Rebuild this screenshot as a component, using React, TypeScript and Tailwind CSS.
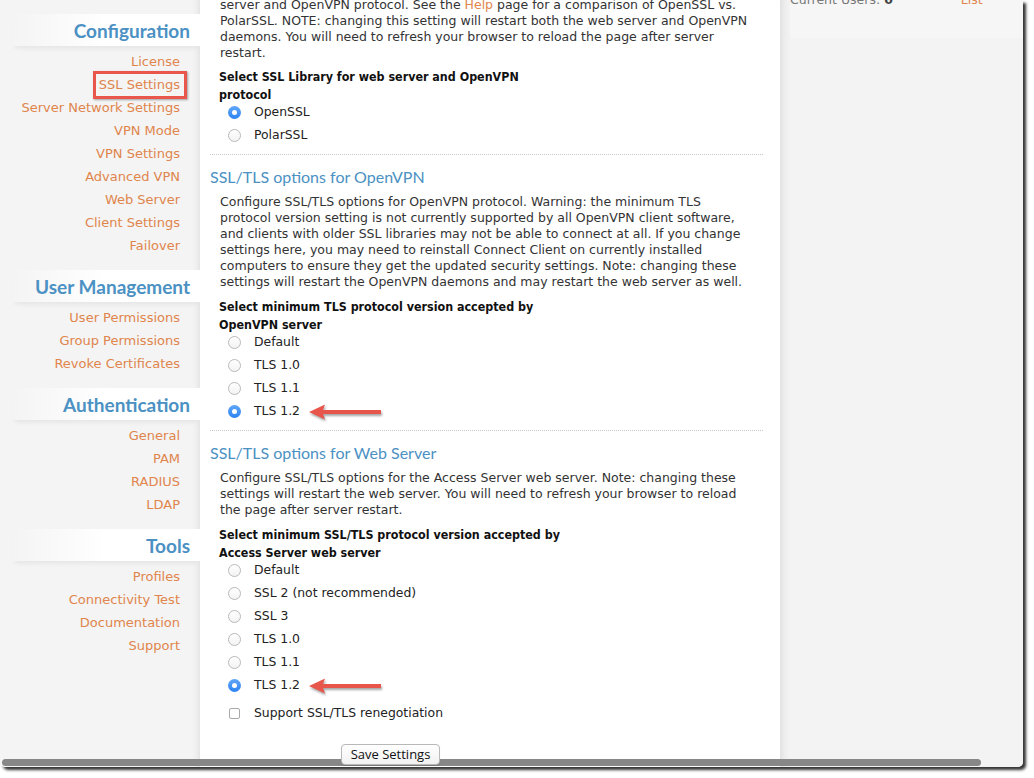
import React from "react";

const body = { fontFamily: '"DejaVu Sans", Verdana, sans-serif' };
const bold = { fontFamily: '"DejaVu Sans Condensed", "DejaVu Sans", Verdana, sans-serif' };
const head = { fontFamily: 'Lato, "Open Sans", sans-serif' };

function SideSection({ title, links }: { title: string; links: string[] }) {
  return (
    <div className="mb-[13px]">
      <div className="h-[32px] ml-[12px] bg-gradient-to-r from-[#f4f4f4] via-white to-white shadow-[0_5px_5px_-3px_rgba(0,0,0,0.07)] flex items-center justify-end pr-[10px]">
        <span className="text-[19px] font-bold text-[#4b91c3] leading-none" style={head}>
          {title}
        </span>
      </div>
      <div className="mt-[4px] flex flex-col items-end pr-[20px]">
        {links.map((l) => (
          <div key={l} className="h-[23px] leading-[23px] text-[13px] text-[#e0854c]" style={body}>
            {l === "SSL Settings" ? (
              <span className="relative inline-block">
                {l}
                <span className="absolute -left-[6px] -right-[7px] -top-[2px] -bottom-[3px] border-[3px] border-[#e9564b] shadow-[1px_1px_2px_rgba(0,0,0,0.35)]" />
              </span>
            ) : (
              l
            )}
          </div>
        ))}
      </div>
    </div>
  );
}

function Radio({ checked }: { checked?: boolean }) {
  return checked ? (
    <span className="w-[13px] h-[13px] rounded-full bg-gradient-to-b from-[#5fa6f7] to-[#2b83f2] flex items-center justify-center shrink-0">
      <span className="w-[5px] h-[5px] rounded-full bg-white" />
    </span>
  ) : (
    <span className="w-[13px] h-[13px] rounded-full border border-[#b9b9b9] bg-gradient-to-b from-white to-[#f3f3f3] shrink-0" />
  );
}

function Arrow() {
  return (
    <svg width="76" height="22" viewBox="0 0 76 22" className="ml-[8px] drop-shadow-[1px_2px_1px_rgba(0,0,0,0.35)]">
      <polygon points="1,11 17,3.5 15,9 73,9 73,13 15,13 17,18.5" fill="#e8564b" />
    </svg>
  );
}

function RadioRow({ label, checked, arrow }: { label: string; checked?: boolean; arrow?: boolean }) {
  return (
    <div className="h-[23px] flex items-center pl-[28px]">
      <Radio checked={checked} />
      <span className="ml-[13px] text-[12.4px] text-[#222]" style={body}>
        {label}
      </span>
      {arrow && <Arrow />}
    </div>
  );
}

function Para({ lines, className = "" }: { lines: React.ReactNode[]; className?: string }) {
  return (
    <div className={"pl-[20px] text-[12.5px] leading-[16px] text-[#333] whitespace-nowrap " + className} style={body}>
      {lines.map((l, i) => (
        <div key={i}>{l}</div>
      ))}
    </div>
  );
}

function Label({ lines, className = "" }: { lines: string[]; className?: string }) {
  return (
    <div className={"pl-[19px] text-[12.4px] leading-[18px] font-bold text-[#111] whitespace-nowrap " + className} style={bold}>
      {lines.map((l, i) => (
        <div key={i}>{l}</div>
      ))}
    </div>
  );
}

function Heading({ children }: { children: React.ReactNode }) {
  return (
    <div className="mt-[10px] pl-[10px] h-[24px] leading-[24px] text-[16px] text-[#4b91c3]" style={head}>
      {children}
    </div>
  );
}

function Divider() {
  return <div className="mt-[7px] ml-[10px] mr-[17px] border-t border-dotted border-[#c8c8c8]" />;
}

export default function App() {
  return (
    <div className="w-[1034px] h-[778px] bg-white overflow-hidden">
      <div className="relative w-[1023px] h-[767px] rounded-b-[5px] overflow-hidden shadow-[3px_3px_3px_rgba(0,0,0,0.8)] flex bg-[#f4f4f4]">
        {/* Sidebar */}
        <div className="w-[200px] shrink-0 pt-[14px] bg-[#f4f4f4] shadow-[inset_-8px_0_8px_-8px_rgba(0,0,0,0.12)]">
          <SideSection
            title="Configuration"
            links={[
              "License",
              "SSL Settings",
              "Server Network Settings",
              "VPN Mode",
              "VPN Settings",
              "Advanced VPN",
              "Web Server",
              "Client Settings",
              "Failover",
            ]}
          />
          <SideSection title="User Management" links={["User Permissions", "Group Permissions", "Revoke Certificates"]} />
          <SideSection title="Authentication" links={["General", "PAM", "RADIUS", "LDAP"]} />
          <SideSection title="Tools" links={["Profiles", "Connectivity Test", "Documentation", "Support"]} />
        </div>

        {/* Main */}
        <div className="w-[580px] shrink-0 bg-white">
          <Para
            className="mt-[-3px]"
            lines={[
              <>
                server and OpenVPN protocol. See the <span className="text-[#e0854c]">Help</span> page for a comparison of OpenSSL vs.
              </>,
              "PolarSSL. NOTE: changing this setting will restart both the web server and OpenVPN",
              "daemons. You will need to refresh your browser to reload the page after server",
              "restart.",
            ]}
          />
          <Label className="mt-[7px]" lines={["Select SSL Library for web server and OpenVPN", "protocol"]} />
          <div className="mt-[-3px]">
            <RadioRow label="OpenSSL" checked />
            <RadioRow label="PolarSSL" />
          </div>
          <Divider />
          <Heading>SSL/TLS options for OpenVPN</Heading>
          <Para
            className="mt-[5px]"
            lines={[
              "Configure SSL/TLS options for OpenVPN protocol. Warning: the minimum TLS",
              "protocol version setting is not currently supported by all OpenVPN client software,",
              "and clients with older SSL libraries may not be able to connect at all. If you change",
              "settings here, you may need to reinstall Connect Client on currently installed",
              "computers to ensure they get the updated security settings. Note: changing these",
              "settings will restart the OpenVPN daemons and may restart the web server as well.",
            ]}
          />
          <Label className="mt-[8px]" lines={["Select minimum TLS protocol version accepted by", "OpenVPN server"]} />
          <div className="mt-[-3px]">
            <RadioRow label="Default" />
            <RadioRow label="TLS 1.0" />
            <RadioRow label="TLS 1.1" />
            <RadioRow label="TLS 1.2" checked arrow />
          </div>
          <Divider />
          <Heading>SSL/TLS options for Web Server</Heading>
          <Para
            className="mt-[5px]"
            lines={[
              "Configure SSL/TLS options for the Access Server web server. Note: changing these",
              "settings will restart the web server. You will need to refresh your browser to reload",
              "the page after server restart.",
            ]}
          />
          <Label className="mt-[8px]" lines={["Select minimum SSL/TLS protocol version accepted by", "Access Server web server"]} />
          <div className="mt-[-3px]">
            <RadioRow label="Default" />
            <RadioRow label="SSL 2 (not recommended)" />
            <RadioRow label="SSL 3" />
            <RadioRow label="TLS 1.0" />
            <RadioRow label="TLS 1.1" />
            <RadioRow label="TLS 1.2" checked arrow />
          </div>
          <div className="mt-[5px] h-[23px] flex items-center pl-[29px]">
            <span className="w-[11px] h-[11px] rounded-[2px] border border-[#a9a9a9] bg-white shrink-0" />
            <span className="ml-[14px] text-[12.4px] text-[#222]" style={body}>
              Support SSL/TLS renegotiation
            </span>
          </div>
          <div className="relative z-10 mt-[16px] pl-[141px]">
            <button
              className="h-[21px] w-[99px] rounded-[4px] border border-[#b8b8b8] bg-gradient-to-b from-white to-[#f1f1f1] text-[13px] text-[#111] leading-none shadow-[0_1px_1px_rgba(0,0,0,0.12)]"
              style={{ fontFamily: '"Open Sans", "DejaVu Sans", sans-serif' }}
            >
              Save Settings
            </button>
          </div>
        </div>

        {/* Right panel */}
        <div className="flex-1 bg-[#f3f3f3] shadow-[inset_10px_0_10px_-8px_rgba(0,0,0,0.1)]">
          <div className="ml-[10px] h-[47px] bg-[#f6f6f6]">
            <div className="mt-[-9px] h-[18px] leading-[18px] flex text-[12.5px]" style={body}>
              <span className="text-[#777]">
                Current Users: <span className="font-bold text-[#444]">0</span>
              </span>
              <span className="ml-[68px] text-[#e0854c]">List</span>
            </div>
          </div>
        </div>

        {/* Scrollbar */}
        <div className="absolute left-[2px] top-[759px] w-[979px] h-[7px] rounded-full bg-[#878787]" />
      </div>
    </div>
  );
}
